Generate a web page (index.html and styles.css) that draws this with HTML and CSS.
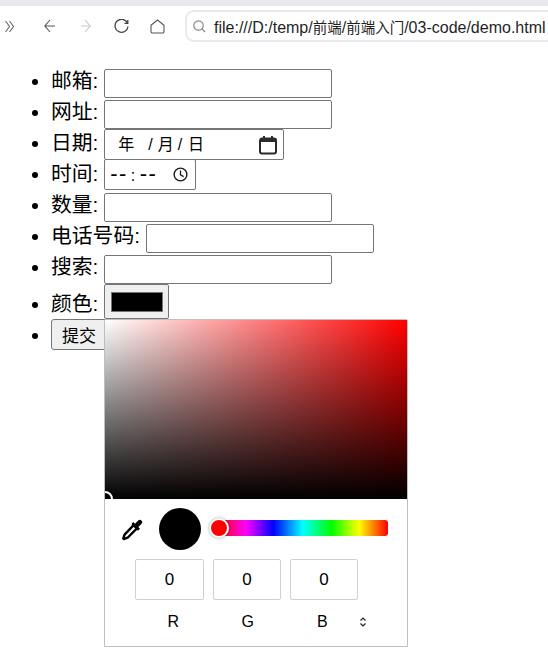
FILE: index.html
```html
<!DOCTYPE html>
<html>
<head>
  <meta charset="UTF-8">
  <title>demo</title>
  <link rel="stylesheet" href="styles.css">
</head>
<body>
  <div class="topStrip"></div>
  <div class="toolbar">
    <svg class="navIcon more" width="9" height="13" viewBox="0 0 9 13"><path d="M.5 1l4 5.500-4 5.500M4.500 1l4 5.500-4 5.500" /></svg>
    <svg class="navIcon back" width="11" height="14" viewBox="0 0 11 14"><path d="M11 7H.800M6 1L.800 7 6 13" /></svg>
    <svg class="navIcon forward" width="10" height="14" viewBox="0 0 10 14"><path d="M0 7h9.200M4 1l5.200 6L4 13" /></svg>
    <svg class="navIcon reload" width="15" height="15" viewBox="0 0 15 15"><path d="M13.300 3.800A6.500 6.500 0 1 0 14 7.500M13.800 1v3.300h-3.300" /></svg>
    <svg class="navIcon home" width="15" height="15" viewBox="0 0 15 15"><path d="M1 6.300L7.500 1 14 6.300v6.200a1.500 1.500 0 0 1-1.500 1.500h-10A1.500 1.500 0 0 1 1 12.500z" /></svg>
    <div class="addressBar">
      <svg class="searchIcon" width="13" height="13" viewBox="0 0 13 13"><circle cx="5.500" cy="5.500" r="4.700" /><path d="M9 9l3.200 3.200" /></svg>
      <span class="url">file:///D:/temp/<span class="urlCjk">前端</span>/<span class="urlCjk">前端入门</span>/03-code/demo.html</span>
    </div>
  </div>

  <form>
    <ul class="fields">
      <li>邮箱: <input type="text" class="field"></li>
      <li>网址: <input type="text" class="field"></li>
      <li>日期: <span class="fakeInput dateInput"><span>年</span><span class="sep1">/</span><span class="month">月</span><span class="sep2">/</span><span class="day">日</span>
        <svg class="pickerIcon" width="18" height="20" viewBox="0 0 18 20"><path d="M1 5.500a2 2 0 0 1 2-2h12a2 2 0 0 1 2 2v11a2 2 0 0 1-2 2H3a2 2 0 0 1-2-2z" fill="none" stroke="#2b2b2b" stroke-width="2" /><path d="M1 3.500h16V7H1zM4 1h2v3H4zM12 1h2v3h-2z" fill="#2b2b2b" /></svg></span></li>
      <li>时间: <span class="fakeInput timeInput"><span class="timeText">--<span class="timeColon">:</span>--</span>
        <svg class="pickerIcon" width="15" height="15" viewBox="0 0 16 16"><circle cx="8" cy="8" r="6.800" fill="none" stroke="#1a1a1a" stroke-width="1.500" /><path d="M8 3.800V8.300l3.300 2" fill="none" stroke="#1a1a1a" stroke-width="1.400" /></svg></span></li>
      <li>数量: <input type="text" class="field"></li>
      <li>电话号码: <input type="text" class="field"></li>
      <li>搜索: <input type="text" class="field"></li>
      <li class="colorRow">颜色: <span class="colorBtn"><span class="swatch"></span></span></li>
      <li class="submitRow"><button type="button" class="submitBtn">提交</button></li>
    </ul>
  </form>

  <div class="colorPopup">
    <div class="satBox">
      <span class="satHandle"></span>
    </div>
    <div class="controls">
      <div class="sliderRow">
        <svg class="dropper" width="24" height="24" viewBox="0 0 22 22">
          <path d="M12.500 7.500l3 3-8.500 8.500-3.500 1.200-.5-.5 1.200-3.500z" fill="#fff" stroke="#000" stroke-width="2.200" stroke-linejoin="round" />
          <path d="M10.500 6.500l6 6 1.800-1.800-1.500-1.500 3-3a2.200 2.200 0 0 0-3.100-3.100l-3 3-1.500-1.500z" fill="#000" />
        </svg>
        <span class="preview"></span>
        <div class="hueBar"><span class="hueHandle"></span></div>
      </div>
      <div class="rgbRow">
        <span class="rgbBox first">0</span>
        <span class="rgbBox">0</span>
        <span class="rgbBox">0</span>
      </div>
      <div class="labelRow">
        <span class="rgbLabel">R</span>
        <span class="rgbLabel">G</span>
        <span class="rgbLabel">B</span>
        <svg class="modeToggle" width="8" height="12" viewBox="0 0 8 12"><path d="M1.500 4.500L4 2l2.500 2.500M1.500 7.500L4 10l2.500-2.500" /></svg>
      </div>
    </div>
  </div>
</body>
</html>
```
FILE: styles.css
```css
/* page */
html, body {
  margin: 0;
  padding: 0;
  background-color: #fff;
}
body {
  position: relative;
  height: 665px;
  overflow: hidden;
  font-family: "Liberation Sans", "Noto Sans CJK SC", sans-serif;
  color: #000;
}

/* browser chrome */
.topStrip {
  height: 6px;
  background-color: #e8e9ee;
}
.toolbar {
  display: flex;
  align-items: center;
  height: 40px;
}
.navIcon {
  flex: none;
  fill: none;
  stroke: #555;
  stroke-width: 1.100;
}
.more {
  margin-left: 5px;
  stroke: #666;
}
.back {
  margin-left: 30px;
}
.forward {
  margin-left: 26px;
  stroke: #c9c9c9;
}
.reload {
  margin-left: 23px;
  stroke: #444;
  stroke-width: 1.300;
}
.home {
  margin-left: 21px;
}
.addressBar {
  box-sizing: border-box;
  flex: none;
  display: flex;
  align-items: center;
  width: 363px;
  height: 32px;
  margin-left: 20px;
  padding-left: 6px;
  border: 2px solid #e8e9ee;
  border-right: none;
  border-radius: 9px 0 0 9px;
  white-space: nowrap;
  overflow: hidden;
}
.searchIcon {
  flex: none;
  fill: none;
  stroke: #888;
  stroke-width: 1.200;
}
.url {
  margin-left: 8px;
  font-size: 16px;
  color: #1f1f1f;
}
.urlCjk {
  font-size: 14.500px;
}

/* form list */
.fields {
  margin: 20px 0 0;
  padding: 0 0 0 51px;
  font-size: 20.800px;
  line-height: 29px;
}
.fields li {
  height: 31px;
}
.fields .colorRow {
  height: 35px;
  margin-top: 1px;
  line-height: 39px;
}
.fields .submitRow {
  line-height: 31px;
}
.field {
  box-sizing: border-box;
  width: 228px;
  height: 29px;
  margin: 0;
  padding: 1px 2px;
  border: 1px solid #767676;
  border-radius: 2px;
  background-color: #fff;
  vertical-align: baseline;
}
.fakeInput {
  box-sizing: border-box;
  display: inline-flex;
  align-items: center;
  height: 31px;
  border: 1px solid #767676;
  border-radius: 2px;
  font-size: 16px;
  vertical-align: baseline;
}
.dateInput {
  width: 180px;
  padding-left: 13px;
}
.sep1 {
  margin-left: 14px;
}
.month {
  margin-left: 5px;
}
.sep2 {
  margin-left: 4px;
}
.day {
  margin-left: 6px;
}
.dateInput .pickerIcon {
  margin-left: auto;
  margin-right: 6px;
}
.timeInput {
  width: 92px;
  padding-left: 5px;
}
.timeText {
  font-size: 22px;
  letter-spacing: 1.500px;
}
.timeColon {
  margin: 0 3px;
  font-size: 16px;
}
.timeInput .pickerIcon {
  margin-left: auto;
  margin-right: 7px;
}
.colorBtn {
  box-sizing: border-box;
  display: inline-flex;
  align-items: center;
  justify-content: center;
  width: 65px;
  height: 35px;
  border: 1px solid #767676;
  border-radius: 2px;
  background-color: #efefef;
  vertical-align: top;
}
.swatch {
  box-sizing: border-box;
  width: 52px;
  height: 20px;
  border: 1px solid #767676;
  background-color: #000;
}
.submitBtn {
  box-sizing: border-box;
  width: 56px;
  height: 31px;
  margin: 0;
  padding: 0;
  border: 1px solid #767676;
  border-radius: 3px;
  background-color: #efefef;
  font-family: "Liberation Sans", "Noto Sans CJK SC", sans-serif;
  font-size: 17px;
  color: #000;
  vertical-align: top;
}

/* color picker popup, sits over the form */
.colorPopup {
  position: absolute;
  left: 104px;
  top: 319px;
  box-sizing: border-box;
  width: 304px;
  height: 328px;
  border: 1px solid #bfbfbf;
  border-radius: 2px 2px 0 0;
  background-color: #fff;
}
.satBox {
  position: relative;
  height: 179px;
  background: linear-gradient(to top, #000, rgba(0, 0, 0, 0)), linear-gradient(to right, #fff, #f00);
  overflow: hidden;
}
.satHandle {
  position: absolute;
  left: -8px;
  bottom: -8px;
  box-sizing: border-box;
  width: 16px;
  height: 16px;
  border: 2px solid #fff;
  border-radius: 50%;
}
.controls {
  padding: 9px 0 0 16px;
}
.sliderRow {
  display: flex;
  align-items: center;
  height: 42px;
}
.dropper {
  flex: none;
  margin-left: -1px;
}
.preview {
  flex: none;
  width: 42px;
  height: 42px;
  margin-left: 15px;
  border-radius: 50%;
  background-color: #000;
}
.hueBar {
  position: relative;
  width: 171px;
  height: 16px;
  margin-left: 16px;
  margin-bottom: 2px;
  border-radius: 0 3px 3px 0;
  background: linear-gradient(to right, #f00 0%, #f0f 17%, #00f 33%, #0ff 50%, #0f0 67%, #ff0 83%, #f00 100%);
}
.hueHandle {
  position: absolute;
  left: -8px;
  top: -2px;
  box-sizing: border-box;
  width: 20px;
  height: 20px;
  border: 2px solid #fff;
  border-radius: 50%;
  background-color: #f00;
  box-shadow: 0 0 3px rgba(0, 0, 0, 0.4);
}
.rgbRow {
  display: flex;
  gap: 9px;
  margin-top: 9px;
  padding-left: 14px;
}
.rgbBox {
  box-sizing: border-box;
  width: 68px;
  height: 41px;
  border: 1px solid #d0d0d0;
  border-radius: 2px;
  font-size: 17px;
  line-height: 39px;
  text-align: center;
}
.rgbBox.first {
  width: 69px;
}
.labelRow {
  display: flex;
  align-items: center;
  height: 20px;
  margin-top: 12px;
  padding-left: 15px;
}
.rgbLabel {
  width: 74.500px;
  font-size: 16px;
  text-align: center;
}
.modeToggle {
  margin-left: -1px;
  fill: none;
  stroke: #222;
  stroke-width: 1.200;
}
```
